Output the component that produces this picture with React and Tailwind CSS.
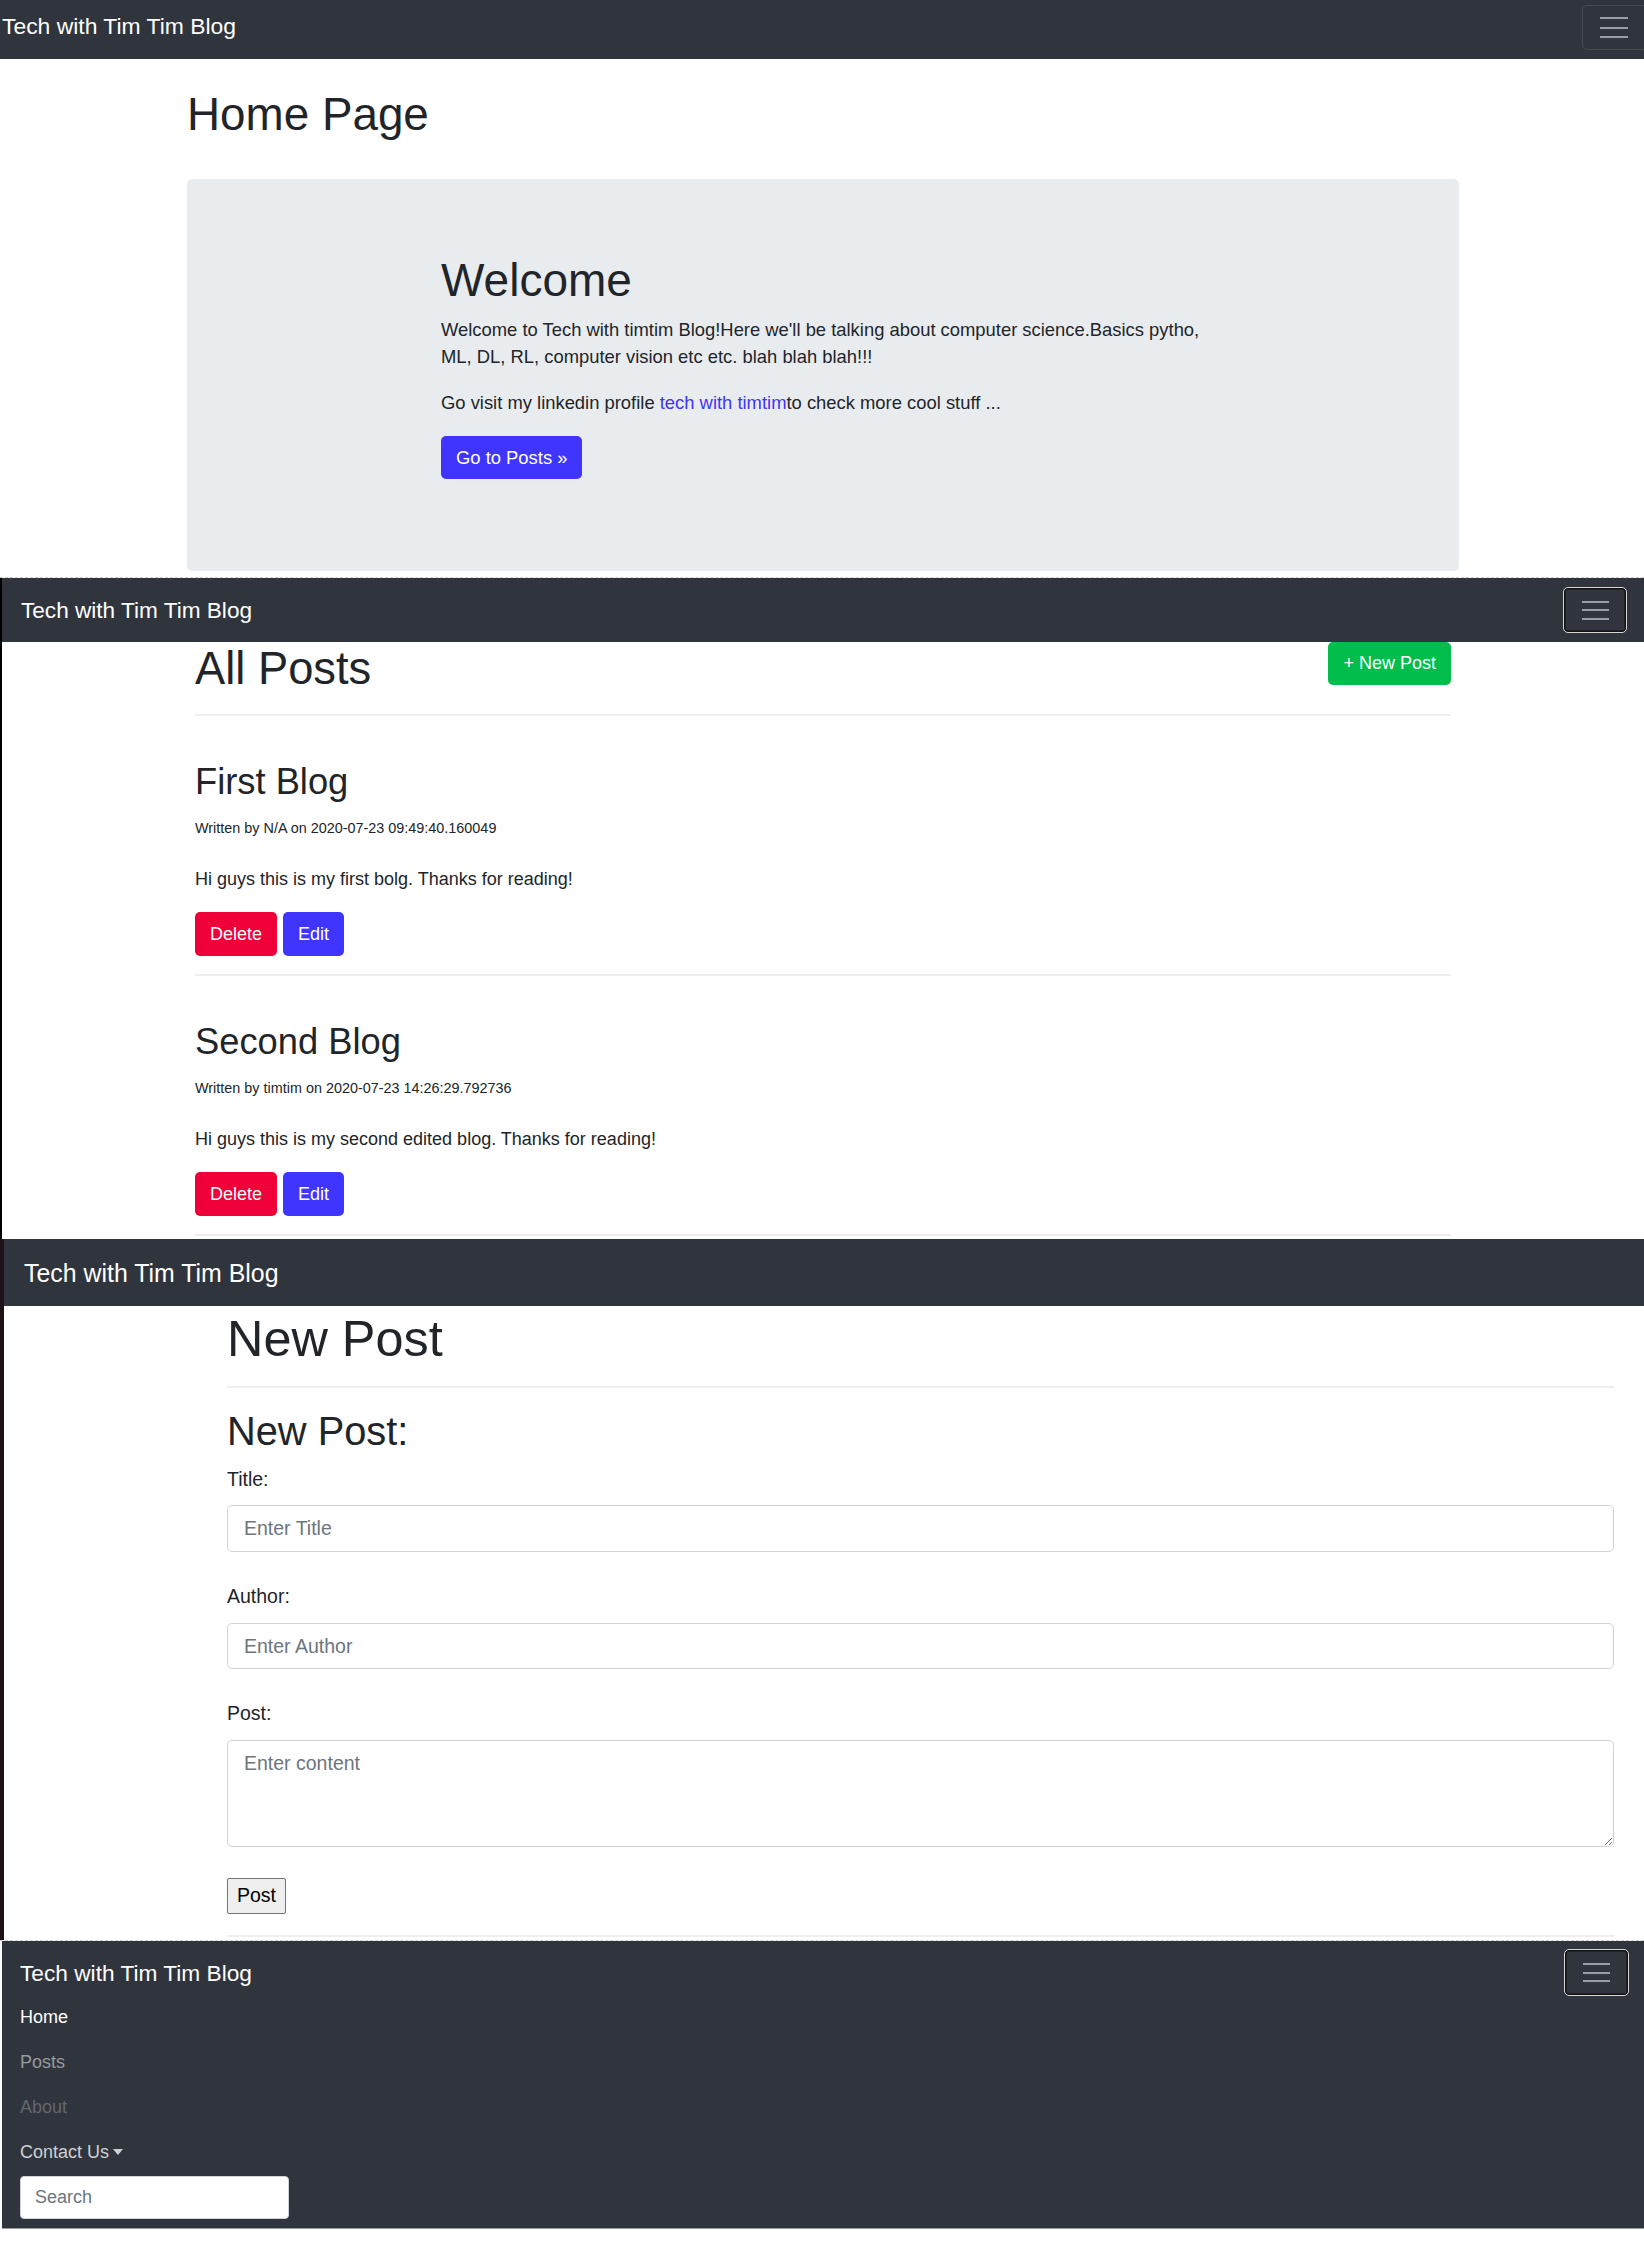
const posts = [
  {
    title: "First Blog",
    author: "N/A",
    date: "2020-07-23 09:49:40.160049",
    body: "Hi guys this is my first bolg. Thanks for reading!",
  },
  {
    title: "Second Blog",
    author: "timtim",
    date: "2020-07-23 14:26:29.792736",
    body: "Hi guys this is my second edited blog. Thanks for reading!",
  },
];

function Lines({ width = "w-[27px]", gap = "gap-[6.5px]" }) {
  return (
    <span className={`flex flex-col ${gap}`}>
      {[0, 1, 2].map((i) => (
        <span key={i} className={`block h-[2px] ${width} bg-[#9a9da2]`} />
      ))}
    </span>
  );
}

function Toggler({ className }) {
  return (
    <button className={`flex items-center justify-center rounded-[5px] border border-[#d6d6d6] shadow-[inset_0_0_0_1.5px_#111] ${className}`}>
      <Lines />
    </button>
  );
}

function HomeSection() {
  return (
    <section className="h-[578px] overflow-hidden border-b border-dashed border-[#cfcfcf]">
      <nav className="flex h-[59px] items-start justify-between overflow-hidden bg-[#30353d] pl-[2px]">
        <a className="mt-[10px] text-[22.9px] leading-[33px] text-white">Tech with Tim Tim Blog</a>
        <button className="-mr-[4px] mt-[5px] flex h-[45px] w-[66px] items-center rounded-[5px] border border-[#454a51] pl-[17px]">
          <Lines width="w-[28px]" gap="gap-[7.5px]" />
        </button>
      </nav>
      <div className="pl-[187px] pr-[185px]">
        <h1 className="mt-[29px] text-[45.8px] leading-[54px]">Home Page</h1>
        <div className="mt-[37px] h-[392px] rounded-[5px] bg-[#e9ecef] pt-[74px]">
          <div className="ml-[254px] w-[772px]">
            <h1 className="text-[46px] leading-[54px]">Welcome</h1>
            <p className="mt-[9px] text-[18.4px] leading-[27px]">
              Welcome to Tech with timtim Blog!Here we'll be talking about computer science.Basics pytho, ML, DL, RL, computer vision etc etc. blah blah blah!!!
            </p>
            <p className="mt-[19px] text-[18.4px] leading-[27px]">
              Go visit my linkedin profile <a className="text-[#4035f5]">tech with timtim</a>to check more cool stuff ...
            </p>
            <a className="mt-[20px] flex h-[43px] w-fit items-center rounded-[5px] bg-[#3f35fe] px-[15px] text-[18.4px] text-white">
              Go to Posts »
            </a>
          </div>
        </div>
      </div>
    </section>
  );
}

function PostsSection() {
  return (
    <section className="h-[661px] overflow-hidden border-l-2 border-black">
      <nav className="flex h-[64px] items-center justify-between bg-[#30353d] pl-[19px] pr-[17px]">
        <span className="text-[22.6px] leading-[33px] text-white">Tech with Tim Tim Blog</span>
        <Toggler className="h-[46px] w-[64px]" />
      </nav>
      <div className="mx-auto w-[1256px]">
        <div className="flex items-start justify-between">
          <h1 className="text-[45.3px] leading-[54px]">All Posts</h1>
          <a className="flex h-[43px] items-center rounded-[5px] bg-[#00bd4c] px-[15px] text-[18px] text-white">+ New Post</a>
        </div>
        <hr className="mt-[18px] border-t-2 border-[#eeeeee]" />
        {posts.map((post) => (
          <article key={post.title}>
            <h2 className="mt-[44px] text-[36.3px] leading-[43px]">{post.title}</h2>
            <p className="mt-[14px] text-[14.4px] leading-[22px]">
              Written by {post.author} on {post.date}
            </p>
            <p className="mt-[27px] text-[18px] leading-[27px]">{post.body}</p>
            <div className="mt-[19px] flex gap-[6px]">
              <a className="flex h-[44px] items-center rounded-[5px] bg-[#ef0039] px-[15px] text-[18px] text-white">Delete</a>
              <a className="flex h-[44px] items-center rounded-[5px] bg-[#3f35fe] px-[15px] text-[18px] text-white">Edit</a>
            </div>
            <hr className="mt-[18px] border-t-2 border-[#eeeeee]" />
          </article>
        ))}
      </div>
    </section>
  );
}

function NewPostSection() {
  const label = "block text-[19.5px] leading-[29px]";
  const field =
    "block w-full rounded-[5px] border border-[#ced4da] bg-white px-[16px] text-[19.5px] outline-none placeholder:text-[#6c757d]";
  return (
    <section className="flex h-[702px] flex-col overflow-hidden">
      <div className="flex-1 border-l-4 border-[#1c1217]">
        <nav className="flex h-[67px] items-center bg-[#30353d] pl-[20px]">
          <span className="text-[24.9px] leading-[36px] text-white">Tech with Tim Tim Blog</span>
        </nav>
        <div className="ml-[223px] w-[1387px]">
          <h1 className="mt-[3px] text-[50.4px] leading-[59px]">New Post</h1>
          <hr className="mt-[18px] border-t-2 border-[#eeeeee]" />
          <h2 className="mt-[20px] text-[39.8px] leading-[47px]">New Post:</h2>
          <label className={`mt-[10px] ${label}`}>Title:</label>
          <input className={`mt-[11px] h-[47px] ${field}`} placeholder="Enter Title" />
          <label className={`mt-[30px] ${label}`}>Author:</label>
          <input className={`mt-[12px] h-[46px] ${field}`} placeholder="Enter Author" />
          <label className={`mt-[30px] ${label}`}>Post:</label>
          <textarea className={`mt-[12px] h-[107px] pt-[8px] leading-[29px] ${field}`} placeholder="Enter content" />
          <button className="mt-[31px] block h-[36px] rounded-[2px] border border-[#767676] bg-[#efefef] px-[9px] text-[19.5px] text-black">
            Post
          </button>
          <hr className="mt-[21px] border-t-2 border-[#eeeeee]" />
        </div>
      </div>
      <div className="border-b border-dashed border-[#cfcfcf]" />
    </section>
  );
}

function MenuSection() {
  return (
    <section className="h-[303px] bg-white pl-[2px]">
      <nav className="h-[287px] bg-[#30353d] pl-[18px] pr-[15px]">
        <div className="flex h-[54px] items-start justify-between">
          <span className="mt-[15.5px] text-[22.7px] leading-[33px] text-white">Tech with Tim Tim Blog</span>
          <Toggler className="mt-[8px] h-[47px] w-[65px]" />
        </div>
        <ul className="text-[18px] leading-[45px]">
          <li className="text-white">Home</li>
          <li className="text-[#979a9e]">Posts</li>
          <li className="text-[#63676d]">About</li>
          <li className="text-[#cfd0d3]">
            Contact Us
            <span className="ml-[4px] inline-block border-x-[5px] border-t-[6px] border-x-transparent border-t-current align-[3px]" />
          </li>
        </ul>
        <input
          className="mt-[1px] block h-[43px] w-[269px] rounded-[4px] border border-[#ced4da] bg-white px-[14px] text-[18px] outline-none placeholder:text-[#6c757d]"
          placeholder="Search"
        />
      </nav>
      <div className="border-t border-[#9a9a9a]" />
    </section>
  );
}

export default function App() {
  return (
    <div className="min-h-[2244px] w-[1644px] bg-white font-['Liberation_Sans',Arial,sans-serif] text-[#212529]">
      <HomeSection />
      <PostsSection />
      <NewPostSection />
      <MenuSection />
    </div>
  );
}
